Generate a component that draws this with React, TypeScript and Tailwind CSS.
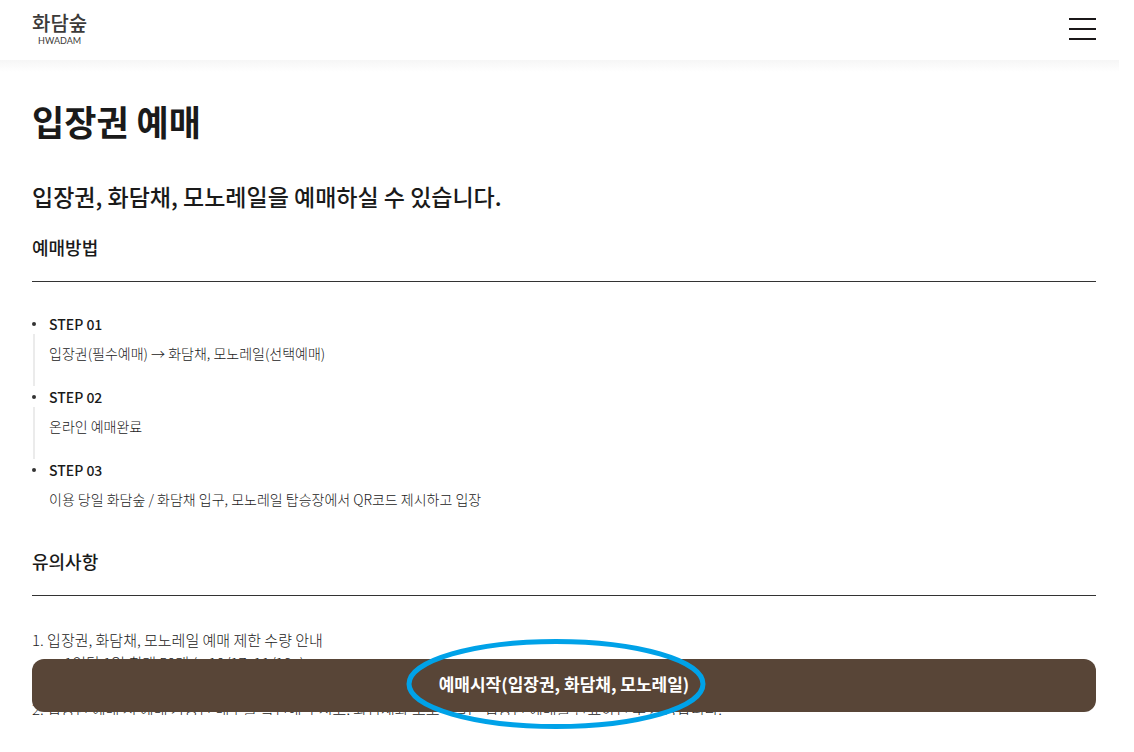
const steps = [
  { title: "STEP 01", text: "입장권(필수예매) → 화담채, 모노레일(선택예매)" },
  { title: "STEP 02", text: "온라인 예매완료" },
  { title: "STEP 03", text: "이용 당일 화담숲 / 화담채 입구, 모노레일 탑승장에서 QR코드 제시하고 입장" },
];

function Header() {
  return (
    <header className="mr-[15px]">
      <div className="flex h-[60px] items-center justify-between pr-[23px] pb-0.5 pl-8">
        <a href="#home" className="flex flex-col items-center text-[#3c3a39]">
          <span className="text-[20px] leading-[22px] font-medium">화담숲</span>
          <span className="pt-px font-['Lato'] text-[9px] leading-3">HWADAM</span>
        </a>
        <button type="button" aria-label="메뉴" className="flex w-[27px] flex-col gap-2">
          <span className="h-0.5 bg-[#1b1819]" />
          <span className="h-0.5 bg-[#1b1819]" />
          <span className="h-0.5 bg-[#1b1819]" />
        </button>
      </div>
      <div className="h-3 bg-linear-to-b from-[#f6f6f6] to-white" />
    </header>
  );
}

function SectionTitle({ children }: { children: string }) {
  return (
    <h3 className="border-b border-[#333] pb-[22px] text-[18px] leading-6 font-medium text-[#1a1a1a]">
      {children}
    </h3>
  );
}

export default function App() {
  return (
    <div className="min-h-screen bg-white font-['Noto_Sans_CJK_KR',sans-serif] text-[#1a1a1a]">
      <Header />
      <main className="pr-[38px] pl-8">
        <h1 className="pt-[23px] text-[35px] leading-[52px] font-bold">입장권 예매</h1>
        <p className="pt-[31px] text-[23px] leading-9 font-medium">
          입장권, 화담채, 모노레일을 예매하실 수 있습니다.
        </p>

        <section className="pt-[21px]">
          <SectionTitle>예매방법</SectionTitle>
          <ol className="pt-8">
            {steps.map((step, i) => (
              <li key={step.title} className="flex h-[73px] gap-[13px]">
                <div className="flex w-1 flex-col items-center pt-2">
                  <span className="size-1 shrink-0 rounded-full bg-[#333]" />
                  {i < steps.length - 1 && <span className="mt-2 h-[52px] w-0.5 bg-[#ebebeb]" />}
                </div>
                <div>
                  <h4 className="text-[14px] leading-5 font-medium">{step.title}</h4>
                  <p className="pt-[7px] text-[14px] leading-6 font-light text-[#222]">{step.text}</p>
                </div>
              </li>
            ))}
          </ol>
        </section>

        <section className="pt-4">
          <SectionTitle>유의사항</SectionTitle>
          <div className="pt-8">
            <ol className="h-[87px] overflow-hidden text-[15px] leading-[23px] font-light text-[#222]">
              <li>
                1. 입장권, 화담채, 모노레일 예매 제한 수량 안내
                <p className="pl-6">- 1인당 1일 최대 50매 ( ~10/17, 11/18~)</p>
                <p className="pl-6">- 1인당 1일 최대 10매 (10/18~11/17)</p>
              </li>
              <li>2. 입장권 예매 시 예매 가능한 매수를 확인해 주시고, 화담채와 모노레일은 입장권 예매를 완료하신 후 가능합니다.</li>
            </ol>
          </div>
        </section>
      </main>

      <div className="fixed right-[38px] bottom-10 left-8">
        <button
          type="button"
          className="h-[53px] w-full rounded-xl bg-[#584537] pb-1 text-[17px] leading-6 font-bold text-white"
        >
          예매시작(입장권, 화담채, 모노레일)
        </button>
        <svg
          className="pointer-events-none absolute -top-5 left-1/2 -ml-[158px]"
          width="300"
          height="90"
          viewBox="0 0 300 90"
          fill="none"
          aria-hidden="true"
        >
          <ellipse cx="150" cy="45" rx="147" ry="42.5" stroke="#00a2e8" strokeWidth="5" />
        </svg>
      </div>
    </div>
  );
}
